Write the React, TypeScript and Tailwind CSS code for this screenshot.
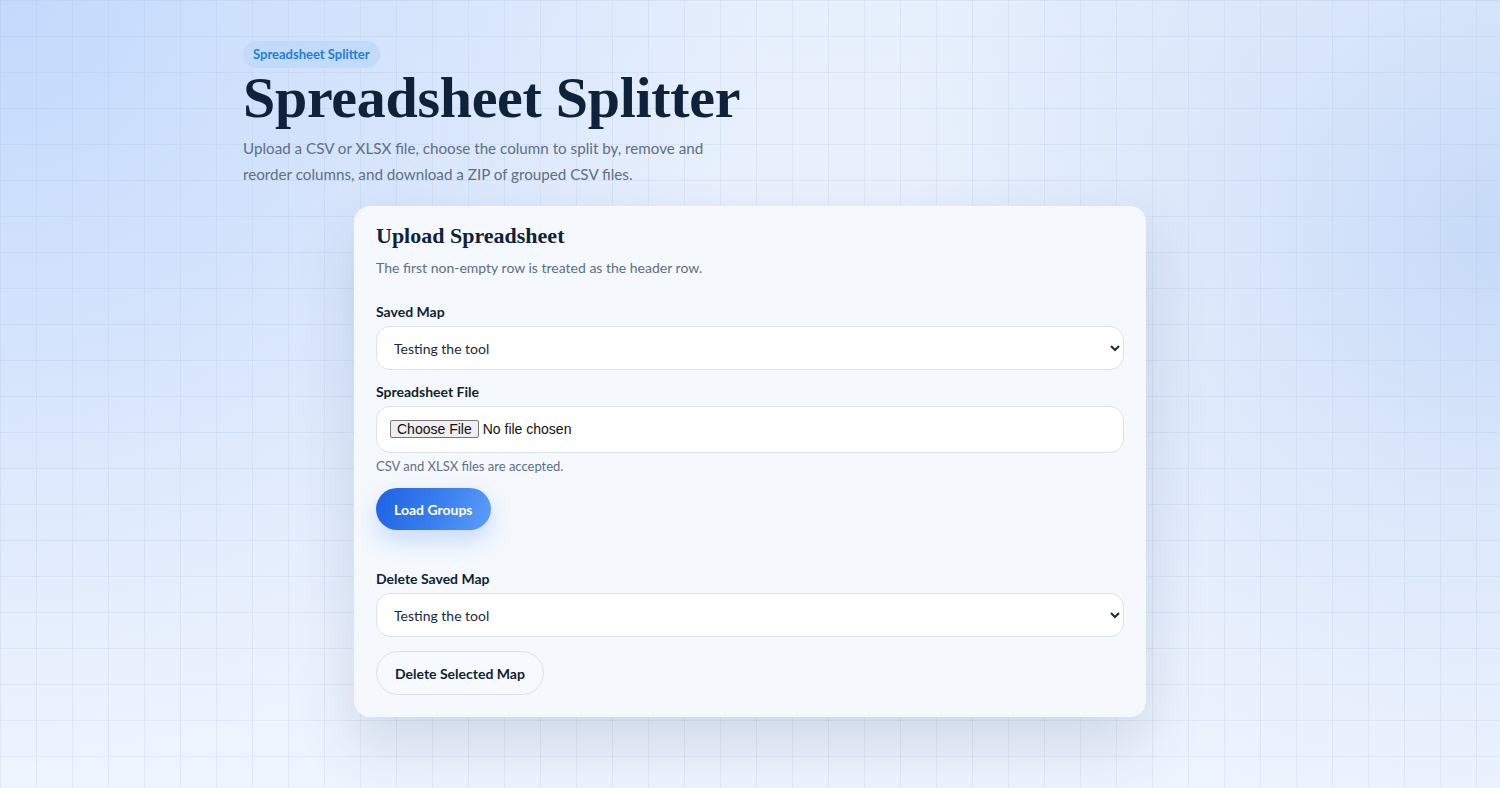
const body = "font-['Lato','Noto_Sans',sans-serif]"

function Label({ children }: { children: React.ReactNode }) {
  return <label className="block text-[14px] font-bold leading-5 text-[#0f1f33]">{children}</label>
}

function MapSelect() {
  return (
    <select
      defaultValue="testing"
      className="mt-1 block h-[44px] w-full rounded-[14px] border border-[#dde3ea] bg-white pl-[13px] pr-2 text-[14px] text-[#1b2a3d]"
    >
      <option value="testing">Testing the tool</option>
    </select>
  )
}

export default function App() {
  return (
    <div className="min-h-screen bg-[radial-gradient(circle_at_0%_0%,#c3dafd_0%,rgba(200,220,252,0.6)_22%,rgba(234,242,253,0)_45%),radial-gradient(circle_at_100%_30%,#c6daf8_0%,rgba(205,222,249,0.6)_15%,rgba(234,242,253,0)_38%),linear-gradient(180deg,#e6effc_0%,#edf3fd_55%,#eef4fe_100%)]">
      <div
        className={`min-h-screen bg-[linear-gradient(to_right,rgba(140,165,205,0.13)_1px,transparent_1px),linear-gradient(to_bottom,rgba(140,165,205,0.13)_1px,transparent_1px)] bg-size-[36px_36px] pb-16 pt-[41px] ${body}`}
      >
        <div className="mx-auto max-w-[1014px]">
          <span className="inline-flex h-[27px] items-center rounded-full bg-[#c4dafb] px-[10px] text-[13px] font-bold text-[#1a7fe3]">
            Spreadsheet Splitter
          </span>
          <h1 className="mt-[1px] font-['Liberation_Serif','Times_New_Roman',serif] text-[58px] font-bold leading-[57px] tracking-[-0.3px] text-[#10213a]">
            Spreadsheet Splitter
          </h1>
          <p className="mt-[9px] max-w-[475px] text-[15.2px] leading-[26px] text-[#5e6e85]">
            Upload a CSV or XLSX file, choose the column to split by, remove and reorder columns, and
            download a ZIP of grouped CSV files.
          </p>
        </div>

        <div className="mx-auto mt-[19px] max-w-[792px] rounded-[16px] bg-[#f5f9fe] px-[22px] pb-[22px] pt-[17px] shadow-[0_26px_60px_rgba(40,70,120,0.16)]">
          <h2 className="font-['Liberation_Serif','Times_New_Roman',serif] text-[22px] font-bold leading-[26px] text-[#10213a]">
            Upload Spreadsheet
          </h2>
          <p className="mt-[9px] text-[14px] leading-5 text-[#5d6e86]">
            The first non-empty row is treated as the header row.
          </p>

          <div className="mt-[24px]">
            <Label>Saved Map</Label>
            <MapSelect />
          </div>

          <div className="mt-[12px]">
            <Label>Spreadsheet File</Label>
            <div className="mt-1 flex h-[47px] items-center rounded-[14px] border border-[#dde3ea] bg-white px-[13px]">
              <input
                type="file"
                accept=".csv,.xlsx"
                className="font-['Liberation_Sans',Arial,sans-serif] text-[14px] text-[#111] file:mr-[4px] file:rounded-[2px] file:border file:border-[#767676] file:bg-[#efefef] file:px-[6px] file:py-0 file:text-[14px] file:leading-[16px] file:text-[#111]"
              />
            </div>
            <p className="mt-1 text-[13px] leading-[18px] text-[#5d6e86]">CSV and XLSX files are accepted.</p>
          </div>

          <button className="mt-[13px] h-[42px] rounded-full bg-[linear-gradient(110deg,#1d62e2_0%,#3b80ee_55%,#5d9ef9_100%)] px-[18px] text-[14px] font-bold text-white shadow-[0_10px_24px_rgba(37,99,235,0.22)]">
            Load Groups
          </button>

          <div className="mt-[39px]">
            <Label>Delete Saved Map</Label>
            <MapSelect />
          </div>

          <button className="mt-[14px] h-[44px] rounded-full border border-[#d9e0e8] bg-[#f6f9fd] px-[18px] text-[14px] font-bold text-[#0f1f33]">
            Delete Selected Map
          </button>
        </div>
      </div>
    </div>
  )
}
